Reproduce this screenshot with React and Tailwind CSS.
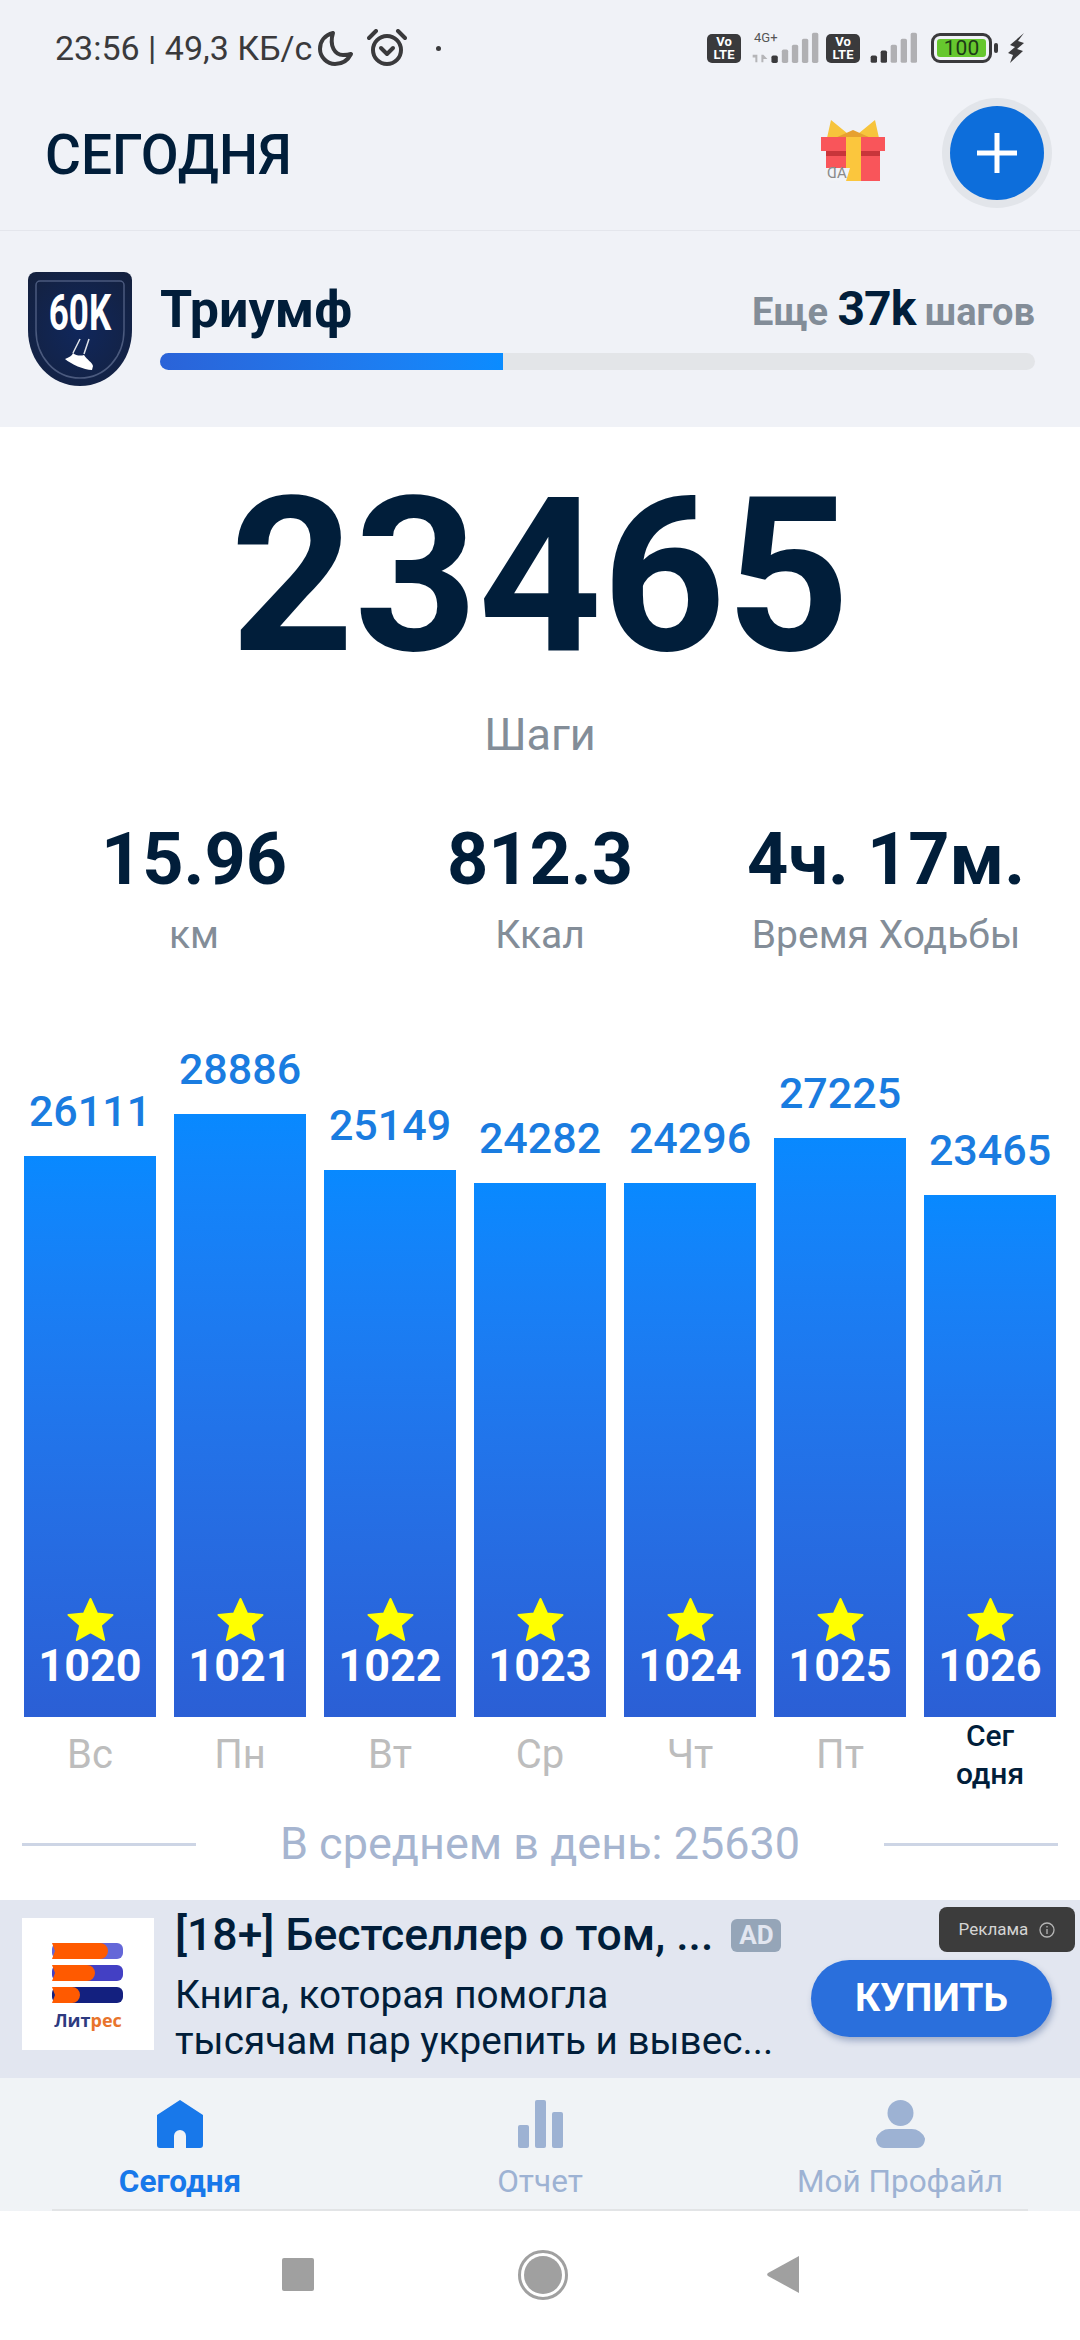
import React from "react";

const days = [
  { value: 26111, number: 1020, day: "Вс", height: "h-[561px]" },
  { value: 28886, number: 1021, day: "Пн", height: "h-[603px]" },
  { value: 25149, number: 1022, day: "Вт", height: "h-[547px]" },
  { value: 24282, number: 1023, day: "Ср", height: "h-[534px]" },
  { value: 24296, number: 1024, day: "Чт", height: "h-[534px]" },
  { value: 27225, number: 1025, day: "Пт", height: "h-[579px]" },
  { value: 23465, number: 1026, day: "Сегодня", height: "h-[522px]" },
];

function Volte() {
  return (
    <div className="w-[34px] h-[29px] rounded-[5px] bg-[#3a3a3c] flex flex-col items-center justify-center text-white font-bold text-[13px] leading-[13px]">
      <span>Vo</span>
      <span>LTE</span>
    </div>
  );
}

function Signal({ active, tops, xs, label, box, width }) {
  return (
    <div className="relative">
      {label && <span className="absolute left-[2px] top-[-1px] text-[13px] leading-[14px] text-[#555]">4G+</span>}
      <svg className="block" width={width} height="32" viewBox={box}>
        {label && <path d="M214 118h14v22h-6v-14h-8zM246 118v22h-6v-22zM246 118l12 12h-12z" fill="#b5b5b8" />}
        {xs.map((x, i) => (
          <rect key={x} x={x} y={tops[i]} width="19" height={142 - tops[i]} rx="5" fill={i < active ? "#3a3a3c" : "#b0b0b3"} />
        ))}
      </svg>
    </div>
  );
}

function StatusBar() {
  return (
    <div className="h-[96px] flex items-center pl-[55px] text-[#3a3a3c] relative">
      <span className="text-[34px] w-[263px] whitespace-nowrap">23:56 | 49,3 КБ/с</span>
      <svg width="36" height="36" viewBox="0 0 36 36" fill="none" stroke="#3a3a3c" strokeWidth="4" strokeLinejoin="round">
        <path d="M15 3C7 5 2 11 2 19c0 8 7 15 15 15 7 0 13-4 16-10-3 1-6 1-8 1C17 25 11 16 15 3z" />
      </svg>
      <svg className="ml-[13px]" width="40" height="38" viewBox="0 0 40 38" fill="none" stroke="#3a3a3c" strokeWidth="4" strokeLinecap="round" strokeLinejoin="round">
        <circle cx="20" cy="21" r="14" />
        <path d="M2 9l7-7M38 9l-7-7" />
        <path d="M14 19l6 6 6-6" />
      </svg>
      <span className="ml-[29px] w-[5px] h-[5px] rounded-full bg-[#3a3a3c]" />
      <div className="ml-auto flex items-center pr-[55px]">
        <Volte />
        <div className="ml-[11px] mr-[7px]">
          <Signal label active={1} box="212 50 200 95" width="67" xs={[270, 301, 331, 361, 391]} tops={[120, 102, 88, 70, 52]} />
        </div>
        <Volte />
        <div className="ml-[9px] mr-[12px]">
          <Signal active={2} box="565 50 150 95" width="50" xs={[570, 600, 630, 660, 690]} tops={[120, 105, 88, 70, 52]} />
        </div>
        <div className="w-[61px] h-[30px] border-[3.5px] border-[#3a3a3c] rounded-[9px] p-[3px]">
          <div className="h-full rounded-[3px] bg-[#66c72e] flex items-center justify-center text-[#1d3a17] text-[21px] leading-none">
            100
          </div>
        </div>
        <span className="ml-[2px] w-[4px] h-[10px] rounded-[2px] bg-[#3a3a3c]" />
        <svg className="ml-[10px]" width="17" height="30" viewBox="0 0 17 30" fill="#3a3a3c">
          <path d="M16 0L2 12l5 2L0 20l5 2-3 8 13-12-6-2 7-6-6-2z" />
        </svg>
      </div>
    </div>
  );
}

function Gift() {
  return (
    <div className="relative w-[64px] h-[62px]">
      <svg width="64" height="62" viewBox="0 0 64 62">
        <path d="M32 18L10 0l-4 18zM32 18L54 0l4 18z" fill="#f7c43c" />
        <path d="M14 18l18-8 18 8z" fill="#e6a030" />
        <rect x="0" y="17" width="64" height="14" fill="#f9555a" />
        <rect x="5" y="31" width="54" height="30" fill="#f9555a" />
        <rect x="5" y="31" width="54" height="5" fill="#c8353a" />
        <rect x="25" y="17" width="15" height="44" fill="#fbc63d" />
        <path d="M5 48h24l-4 13H5z" fill="#f1f3f7" />
      </svg>
      <span className="absolute left-[6px] top-[45px] text-[15px] leading-[16px] text-[#8a8a8a] -scale-x-100">AD</span>
    </div>
  );
}

function Header() {
  return (
    <div className="h-[135px] pb-[21px] pl-[45px] flex items-center border-b border-[#e4e6ec]">
      <h1 className="mt-[5px] text-[55px] font-medium text-[#011e3a] leading-none">СЕГОДНЯ</h1>
      <div className="ml-auto mr-[57px] mb-[4px]">
        <Gift />
      </div>
      <div className="mr-[28px] w-[110px] h-[110px] rounded-full bg-[#e2e5ea] flex items-center justify-center">
        <div className="w-[94px] h-[94px] rounded-full bg-[#0d6edb] flex items-center justify-center">
          <svg width="40" height="40" viewBox="0 0 40 40" fill="#fff">
            <rect x="17.5" y="0" width="5" height="40" />
            <rect x="0" y="17.5" width="40" height="5" />
          </svg>
        </div>
      </div>
    </div>
  );
}

function Badge() {
  return (
    <div className="relative w-[104px] h-[114px] shrink-0">
      <svg width="104" height="114" viewBox="0 0 104 114" className="absolute inset-0">
        <defs>
          <radialGradient id="badgeFill" cx="50%" cy="50%" r="65%">
            <stop offset="0%" stopColor="#10275c" />
            <stop offset="100%" stopColor="#14213f" />
          </radialGradient>
        </defs>
        <path d="M8 0h88a8 8 0 0 1 8 8v50c0 32-23 56-52 56S0 90 0 58V8a8 8 0 0 1 8-8z" fill="url(#badgeFill)" />
        <path d="M12 9h80a4 4 0 0 1 4 4v45c0 27-19 48-44 48S8 85 8 58V13a4 4 0 0 1 4-4z" fill="none" stroke="#4b5a7e" strokeWidth="1.5" />
        <path d="M52 67l-7 14M61 67l-5 15" stroke="#dfe3ea" strokeWidth="1.5" fill="none" />
        <path d="M45 81C48 84 53 84 56 83C59 88 64 90 65 94L64 98C56 98 43 92 37 87C41 85 44 84 45 81z" fill="#fff" />
      </svg>
      <span className="absolute left-0 right-0 top-[16px] text-center text-white font-bold text-[50px] leading-[50px] scale-x-[0.7]">
        60K
      </span>
    </div>
  );
}

function Achievement() {
  return (
    <div className="h-[196px] pt-[41px] pl-[28px] pr-[45px] flex">
      <Badge />
      <div className="ml-[28px] flex-1">
        <div className="h-[64px] mt-[6px] flex items-end justify-between">
          <span className="text-[52px] font-bold text-[#011e3a] leading-[64px]">Триумф</span>
          <span className="text-[38px] font-bold text-[#838d98] leading-[60px] whitespace-nowrap">
            Еще <span className="text-[48px] text-[#011e3a] tracking-[-1px]">37k</span> шагов
          </span>
        </div>
        <div className="mt-[11px] h-[17px] rounded-full bg-[#e3e5e8] overflow-hidden">
          <div className="h-full w-[343px] bg-gradient-to-r from-[#2a63d8] to-[#0a8cff]" />
        </div>
      </div>
    </div>
  );
}

function Stat({ value, label }) {
  return (
    <div className="flex flex-col items-center">
      <span className="text-[72px] font-bold text-[#011e3a] leading-[80px] whitespace-nowrap">{value}</span>
      <span className="mt-[10px] text-[39px] text-[#838d98] leading-[50px] whitespace-nowrap">{label}</span>
    </div>
  );
}

function Star() {
  return (
    <svg width="47" height="44" viewBox="0 0 47 44" fill="#ffff00" stroke="#ffff00" strokeWidth="2" strokeLinejoin="round">
      <path d="M23.5 2l6.5 14.5 15.5 1.500-11.700 10.300 3.400 14.700-13.700-7.800-13.700 7.800 3.400-14.700L1.500 18 17 16.500z" />
    </svg>
  );
}

function Bars() {
  return (
    <div className="mt-[79px] h-[678px] px-[24px] flex items-end gap-[18px]">
      {days.map((d) => (
        <div key={d.number} className="w-[132px] flex flex-col items-center">
          <span className="mb-[17px] text-[43px] font-medium text-[#1a7ce0] leading-[56px]">{d.value}</span>
          <div className={`w-full ${d.height} bg-gradient-to-b from-[#0889ff] to-[#2b5fd5] flex flex-col items-center justify-end pb-[28px]`}>
            <Star />
            <span className="mt-[2px] text-[45px] font-bold text-white leading-[46px]">{d.number}</span>
          </div>
        </div>
      ))}
    </div>
  );
}

function DayLabels() {
  return (
    <div className="h-[76px] px-[24px] flex gap-[18px]">
      {days.map((d) =>
        d.day === "Сегодня" ? (
          <div key={d.day} className="w-[132px] flex flex-col items-center justify-center text-[30px] font-medium text-[#011e3a] leading-[38px]">
            <span>Сег</span>
            <span>одня</span>
          </div>
        ) : (
          <div key={d.day} className="w-[132px] flex items-center justify-center text-[40px] text-[#bdbdbd]">
            {d.day}
          </div>
        )
      )}
    </div>
  );
}

function Average() {
  return (
    <div className="mt-[26px] h-[50px] px-[22px] flex items-center justify-between">
      <span className="w-[174px] h-[3px] bg-[#cdd5e5]" />
      <span className="text-[45px] text-[#a6b5d0] leading-[50px]">В среднем в день: 25630</span>
      <span className="w-[174px] h-[3px] bg-[#cdd5e5]" />
    </div>
  );
}

function LitresLogo() {
  return (
    <div className="w-[132px] h-[132px] bg-white shrink-0 flex flex-col items-center pt-[25px]">
      <svg width="72" height="60" viewBox="0 0 72 60">
        <rect x="0" y="0" width="71" height="16" rx="6" fill="#6467d8" />
        <path d="M0 0h48a8 8 0 0 1 0 16H0l3-8z" fill="#ff5a00" />
        <rect x="0" y="22" width="71" height="16" rx="6" fill="#4340c4" />
        <path d="M0 22h35a8 8 0 0 1 0 16H0l3-8z" fill="#ff5a00" />
        <rect x="0" y="44" width="71" height="16" rx="6" fill="#13207f" />
        <path d="M0 44h20a8 8 0 0 1 0 16H0l3-8z" fill="#ff5a00" />
      </svg>
      <span className="mt-[6px] text-[18px] font-bold leading-[22px] font-['Open_Sans',sans-serif]">
        <span className="text-[#2d3a80]">Лит</span>
        <span className="text-[#e8742c]">рес</span>
      </span>
    </div>
  );
}

function Ad() {
  return (
    <div className="relative h-[178px] bg-[#e2e6f0] flex pl-[22px] pt-[18px] shrink-0">
      <LitresLogo />
      <div className="ml-[21px] w-[636px] mt-[-8px] text-[#011e3a]">
        <div className="flex items-center h-[50px]">
          <span className="text-[44.5px] font-medium leading-[50px] whitespace-nowrap">[18+] Бестселлер о том, ...</span>
          <span className="ml-[18px] w-[50px] h-[33px] rounded-[6px] bg-[#95a5b8] text-[#e2e6f0] font-bold text-[26px] leading-[33px] text-center">
            AD
          </span>
        </div>
        <p className="mt-[12px] text-[38.7px] leading-[46px] whitespace-nowrap">Книга, которая помогла</p>
        <p className="text-[38.7px] leading-[46px] whitespace-nowrap">тысячам пар укрепить и вывес...</p>
      </div>
      <button className="mt-[42px] w-[241px] h-[77px] rounded-full bg-[#2a6fdc] text-white text-[39px] font-bold shadow-[2px_4px_6px_rgba(40,70,130,0.35)]">
        КУПИТЬ
      </button>
      <div className="absolute right-[5px] top-[7px] w-[136px] h-[45px] rounded-[8px] bg-[#3c3c3c] flex items-center justify-center gap-[11px] text-[#d4d4d4] text-[17px]">
        <span>Реклама</span>
        <svg width="16" height="16" viewBox="0 0 16 16" fill="none" stroke="#b5b5b5" strokeWidth="1.3">
          <circle cx="8" cy="8" r="7" />
          <path d="M8 7v5M8 4v1.500" />
        </svg>
      </div>
    </div>
  );
}

function NavItem({ icon, label, active }) {
  return (
    <div className="flex flex-col items-center">
      <div className="h-[48px] flex items-center">{icon}</div>
      <span className={`mt-[14px] text-[31.5px] leading-[40px] ${active ? "font-bold text-[#1878ea]" : "text-[#9db2d3]"}`}>{label}</span>
    </div>
  );
}

function BottomNav() {
  return (
    <div className="h-[133px] bg-[#f0f3f6] pt-[22px] shrink-0 relative">
      <div className="grid grid-cols-3">
        <NavItem
          active
          label="Сегодня"
          icon={
            <svg width="46" height="48" viewBox="0 0 46 48" fill="#1878ea">
              <path d="M23 0L46 15v30a3 3 0 0 1-3 3H29V36a6 6 0 0 0-12 0v12H3a3 3 0 0 1-3-3V15z" />
            </svg>
          }
        />
        <NavItem
          label="Отчет"
          icon={
            <svg width="45" height="48" viewBox="0 0 45 48" fill="#9db2d3">
              <rect x="0" y="25" width="11" height="23" rx="2" />
              <rect x="17" y="0" width="11" height="48" rx="2" />
              <rect x="34" y="12" width="11" height="36" rx="2" />
            </svg>
          }
        />
        <NavItem
          label="Мой Профайл"
          icon={
            <svg width="49" height="48" viewBox="0 0 49 48" fill="#9db2d3">
              <ellipse cx="24.500" cy="13" rx="13" ry="13" />
              <path d="M14 29h21a14 14 0 0 1 14 9.500c0 5-3 9.500-8 9.500H8c-5 0-8-4.500-8-9.500A14 14 0 0 1 14 29z" />
            </svg>
          }
        />
      </div>
      <div className="absolute bottom-0 left-[52px] right-[52px] h-[2px] bg-[#e2e4e6]" />
    </div>
  );
}

function SystemNav() {
  return (
    <div className="h-[129px] bg-white flex items-center justify-center shrink-0 pb-[2px]">
      <span className="w-[32px] h-[33px] rounded-[2px] bg-[#a0a0a0]" />
      <span className="ml-[204px] w-[50px] h-[50px] rounded-full border-[3px] border-[#a0a0a0] flex items-center justify-center">
        <span className="w-[38px] h-[38px] rounded-full bg-[#a0a0a0]" />
      </span>
      <svg className="ml-[199px]" width="32" height="37" viewBox="0 0 32 37" fill="#a0a0a0">
        <path d="M32 0v37L1 20a2 2 0 0 1 0-3z" />
      </svg>
    </div>
  );
}

export default function App() {
  return (
    <div className="w-[1080px] h-[2340px] bg-[#f0f2f7] flex flex-col overflow-hidden font-['Roboto',sans-serif]">
      <StatusBar />
      <Header />
      <Achievement />
      <main className="flex-1 bg-white flex flex-col">
        <div className="mt-[44px] text-center text-[216px] font-bold text-[#011e3a] leading-[212px]">23465</div>
        <div className="mt-[27px] text-center text-[45px] text-[#838d98] leading-[50px]">Шаги</div>
        <div className="mt-[60px] px-[21px] grid grid-cols-3">
          <Stat value="15.96" label="км" />
          <Stat value="812.3" label="Ккал" />
          <Stat value="4ч. 17м." label="Время Ходьбы" />
        </div>
        <Bars />
        <DayLabels />
        <Average />
      </main>
      <Ad />
      <BottomNav />
      <SystemNav />
    </div>
  );
}
